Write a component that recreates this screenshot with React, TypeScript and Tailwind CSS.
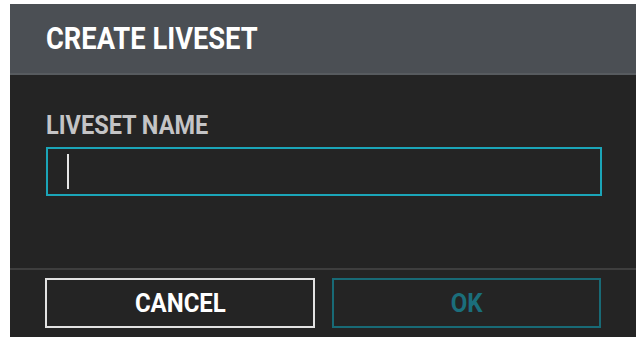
export default function App() {
  return (
    <div className="min-h-screen bg-white pt-[4px] pl-[10px]" style={{ fontFamily: "Roboto, 'Liberation Sans', sans-serif" }}>
      <div className="flex h-[333px] w-[626px] flex-col bg-[#242424]">
        <div className="flex h-[71px] items-center border-b-2 border-[#575b5f] bg-[#4b4f54] px-[36px]">
          <span className="inline-block origin-left scale-x-[0.88] text-[31px] font-bold leading-none text-white">
            CREATE LIVESET
          </span>
        </div>
        <div className="flex flex-1 flex-col px-[36px] pt-[38px]">
          <span className="inline-block origin-left scale-x-[0.94] text-[25px] font-bold leading-none text-[#c4c4c6]">
            LIVESET NAME
          </span>
          <div className="mt-[9px] flex h-[49px] w-[556px] items-center border-2 border-[#1ba5b8] pl-[19px]">
            <div className="h-[35px] w-[2px] bg-[#e6e6e6]" />
          </div>
        </div>
        <div className="flex h-[69px] gap-[17px] border-t-2 border-[#3e3e3e] px-[35px] pt-[8px]">
          <button className="flex h-[50px] w-[270px] items-center justify-center border-2 border-[#e2e2e2]">
            <span className="inline-block scale-x-[0.96] text-[25px] font-bold leading-none text-white">CANCEL</span>
          </button>
          <button className="flex h-[50px] w-[269px] items-center justify-center border-2 border-[#186a76]">
            <span className="inline-block scale-x-[0.96] text-[25px] font-bold leading-none text-[#1b6e7b]">OK</span>
          </button>
        </div>
      </div>
    </div>
  );
}
